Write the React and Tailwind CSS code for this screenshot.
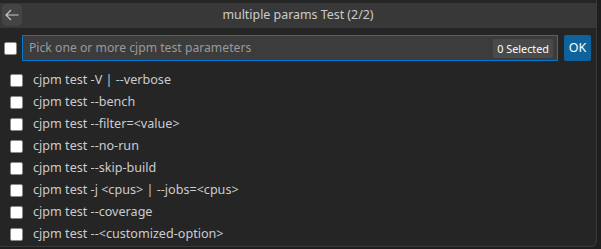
import { useState } from 'react'

const options = [
  'cjpm test -V | --verbose',
  'cjpm test --bench',
  'cjpm test --filter=<value>',
  'cjpm test --no-run',
  'cjpm test --skip-build',
  'cjpm test -j <cpus> | --jobs=<cpus>',
  'cjpm test --coverage',
  'cjpm test --<customized-option>',
]

function Box({ className = '' }) {
  return <span className={`block w-[13px] h-[13px] bg-white border border-[#8a8a8a] rounded-[2px] ${className}`} />
}

export default function App() {
  const [query, setQuery] = useState('')

  return (
    <div className="w-[601px] h-[249px] bg-[#1e1e1e] overflow-hidden" style={{ fontFamily: '"Noto Sans", "Open Sans", sans-serif' }}>
      <div className="w-[597px] h-[247px] bg-[#252526] border-r border-b border-[#3a3a3a] rounded-br-[6px] pt-[3px]">
        {/* title bar */}
        <div className="relative h-[25px] bg-[#383838] flex items-center justify-center">
          <button className="absolute left-[2px] top-[1px] w-[20px] h-[22px] rounded-[5px] bg-[#444444] flex items-center justify-center">
            <svg width="16" height="16" viewBox="0 0 16 16" fill="none" stroke="#c5c5c5" strokeWidth="1.2">
              <path d="M14.5 8H2M7 3L2 8l5 5" />
            </svg>
          </button>
          <span className="text-[12.4px] text-[#cccccc]">multiple params Test (2/2)</span>
        </div>

        {/* input row */}
        <div className="flex items-center mt-[7px] pl-[4px] pr-[5px] h-[26px]">
          <Box />
          <div className="ml-[5px] flex-1 h-[26px] border border-[#0078d4] bg-[#3c3c3c] flex items-center pl-[6px] pr-[4px]">
            <input
              value={query}
              onChange={(e) => setQuery(e.target.value)}
              placeholder="Pick one or more cjpm test parameters"
              className="flex-1 bg-transparent outline-none text-[12.2px] text-[#cccccc] placeholder:text-[#9a9a9a]"
            />
            <span className="h-[19px] px-[4px] rounded-[2px] bg-[#4a4a4a] text-[10.8px] leading-[19px] text-white">0 Selected</span>
          </div>
          <button className="ml-[6px] w-[27px] h-[26px] rounded-[2px] bg-[#0e639c] text-white text-[12.5px]">OK</button>
        </div>

        {/* list */}
        <ul className="mt-[8px]">
          {options.map((opt) => (
            <li key={opt} className="h-[22px] flex items-center pl-[10px]">
              <Box />
              <span className="ml-[10px] text-[12.6px] text-[#cccccc]">{opt}</span>
            </li>
          ))}
        </ul>
      </div>
    </div>
  )
}
